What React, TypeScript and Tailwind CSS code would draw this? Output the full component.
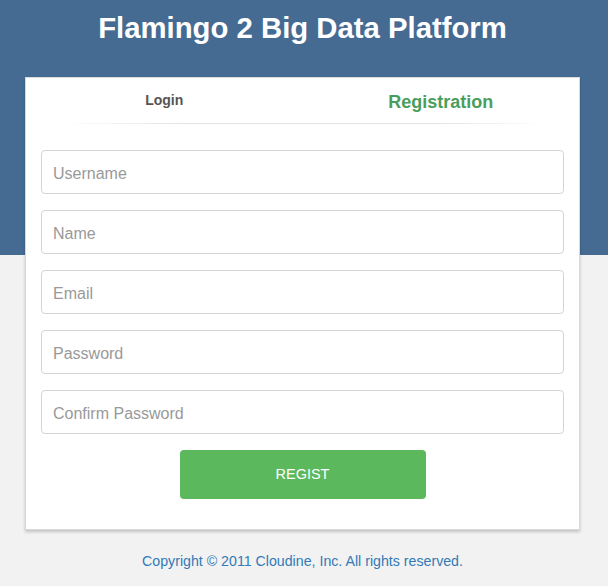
import React from 'react';

const fields = ['Username', 'Name', 'Email', 'Password', 'Confirm Password'];

export default function App() {
  return (
    <div className="min-h-[586px] w-full bg-[linear-gradient(to_bottom,#466b93_0,#466b93_255px,#f2f2f2_255px)] font-['Liberation_Sans',Arial,sans-serif]">
      <div className="flex w-[605px] flex-col items-center">
        {/* Header */}
        <h1 className="mt-[10px] text-[29.3px] font-bold leading-[36px] text-white">
          Flamingo 2 Big Data Platform
        </h1>

        {/* Card */}
        <div className="mt-[31px] w-[555px] border border-[#d9d9d9] bg-white shadow-[0_2px_3px_rgba(0,0,0,0.2)]">
          <div className="flex h-[45px]">
            <div className="flex flex-1 items-center justify-center text-[14px] font-bold text-[#555]">
              Login
            </div>
            <div className="flex flex-1 items-center justify-center pt-[3px] text-[18px] font-bold text-[#4a9e5c]">
              Registration
            </div>
          </div>
          <div className="mx-[36px] h-px bg-[linear-gradient(to_right,rgba(229,229,229,0),#e3e3e3_25%,#e3e3e3_78%,rgba(229,229,229,0))]" />

          <div className="flex flex-col gap-4 px-[15px] pt-[26px] pb-[30px]">
            {fields.map((f) => (
              <input
                key={f}
                type={f.includes('Password') ? 'password' : 'text'}
                placeholder={f}
                className="h-[44px] w-full rounded-[4px] border border-[#d4d4d4] px-[11px] pt-[3px] text-[16px] text-[#555] placeholder:text-[#999] focus:outline-none"
              />
            ))}
            <button className="mx-auto h-[49px] w-[246px] rounded-[4px] bg-[#5cb85c] text-[14.5px] text-white">
              REGIST
            </button>
          </div>
        </div>

        {/* Footer */}
        <p className="mt-[21px] text-[14.2px] leading-[20px] text-[#337ab7]">
          Copyright © 2011 Cloudine, Inc. All rights reserved.
        </p>
      </div>
    </div>
  );
}
